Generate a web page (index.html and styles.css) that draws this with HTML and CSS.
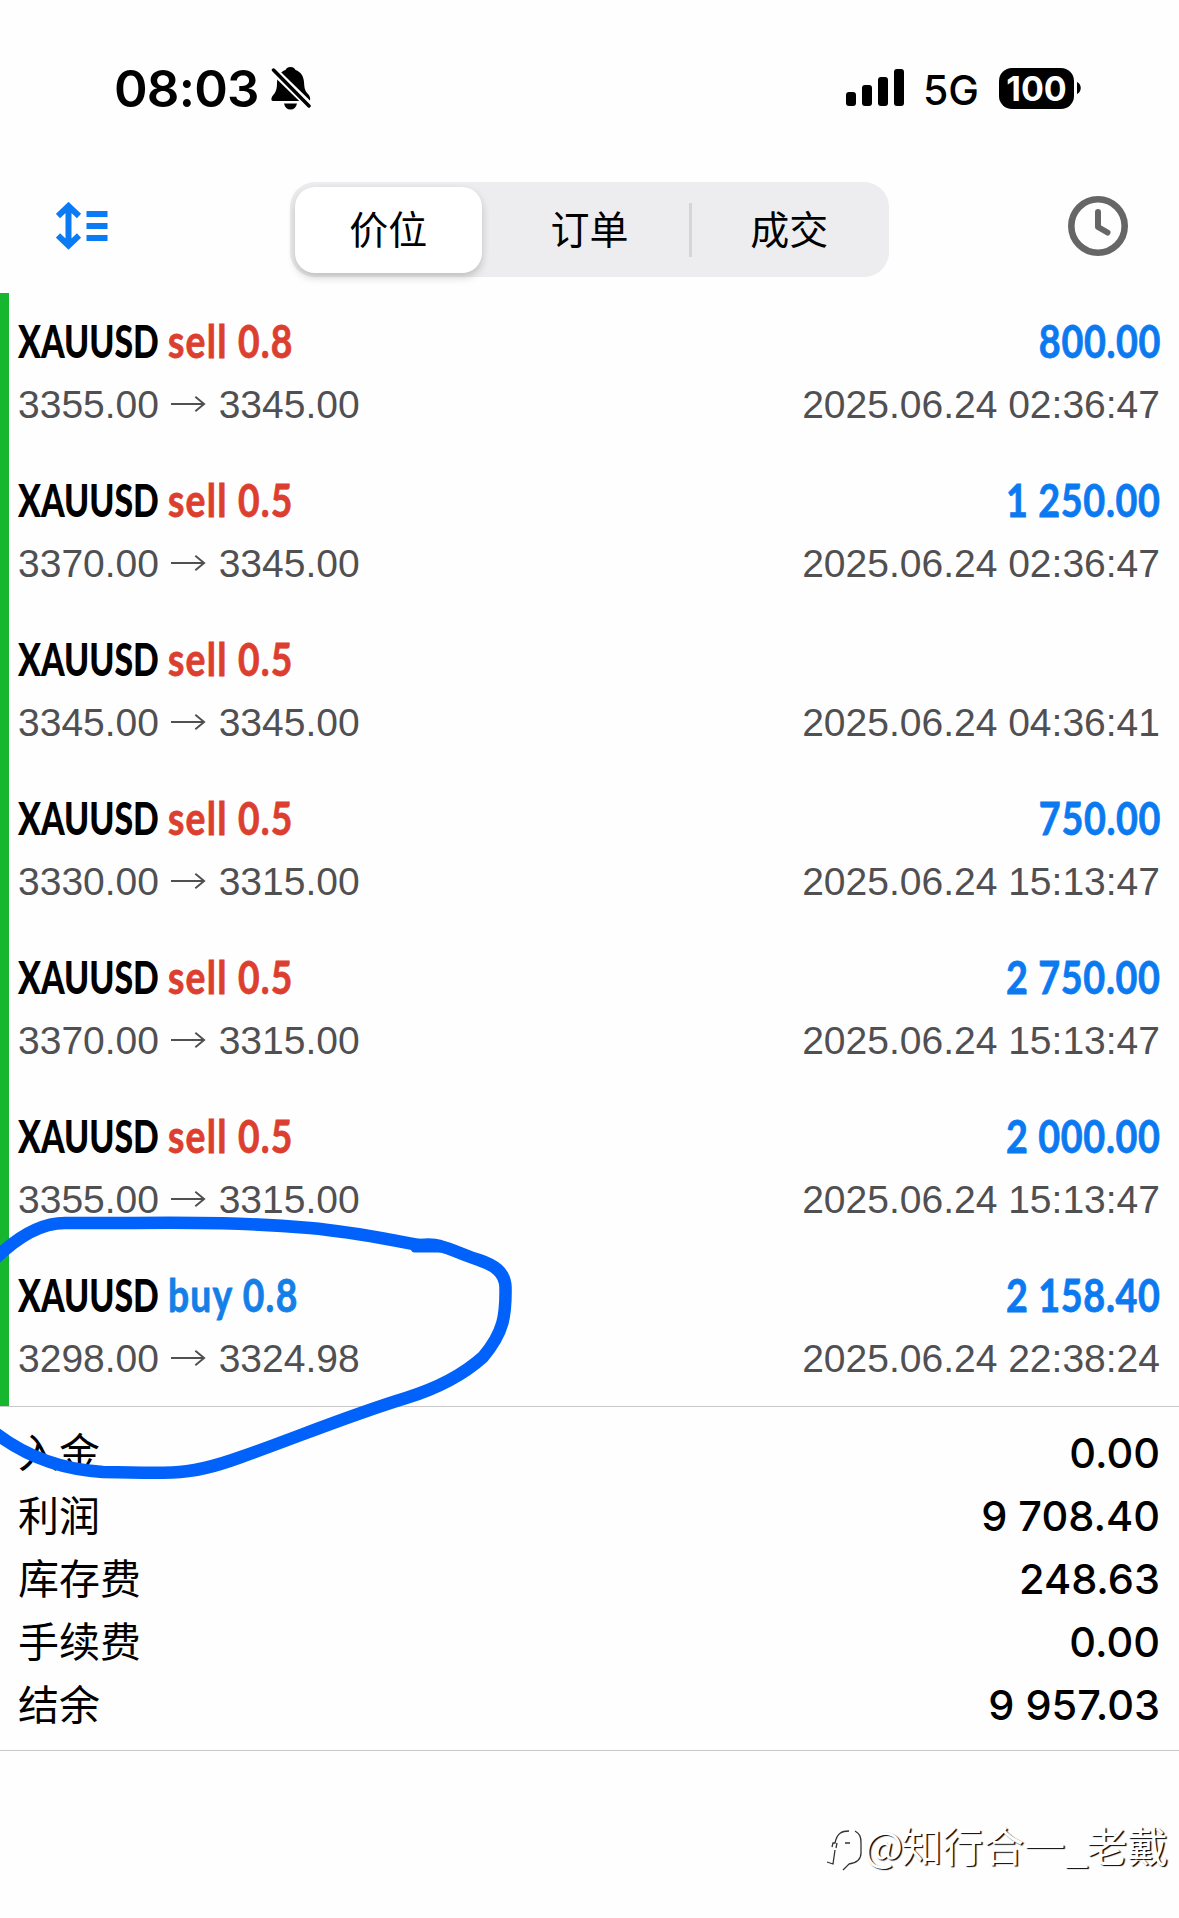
FILE: index.html
```
<!DOCTYPE html>
<html lang="zh-CN">
<head>
    <meta charset="UTF-8">
    <meta name="viewport" content="width=device-width, initial-scale=1.0">
    <title>历史</title>
    <link rel="stylesheet" href="styles.css">
</head>
<body>
<svg class="defs" width="0" height="0">
    <symbol id="arrow" viewBox="0 0 39 28">
        <path d="M1 14H35M26 6.5L35 14L26 21.5" fill="none" stroke="#505052" stroke-width="2"/>
    </symbol>
</svg>
<header class="status">
    <div class="status-left">
        <span class="time">08:03</span>
        <svg width="40" height="43" viewBox="0 0 40 43">
            <path d="M19.500 0C22.500 0 24 1.500 24.500 3C30 5 32.500 9 33 15C33.300 21 34 24 37 27C39 29 39.500 31 39 34H2C0 34 0 31 1.500 29C5 25 6 22 6 16C6.300 9 9 5 14.500 3C15 1.500 16.500 0 19.500 0Z"/>
            <path d="M13 36.500H26C25 40.500 23 42.500 19.500 42.500S14 40.500 13 36.500Z"/>
            <path d="M0 1L40 40" stroke="#fff" stroke-width="8"/>
            <path d="M2.500 3L38 39" stroke="#000" stroke-width="3.500" stroke-linecap="round"/>
        </svg>
    </div>
    <div class="status-right">
        <svg width="58" height="38" viewBox="0 0 58 38">
            <rect x="0" y="23" width="10" height="14" rx="3"/>
            <rect x="16" y="16" width="10" height="21" rx="3"/>
            <rect x="32" y="8" width="10" height="29" rx="3"/>
            <rect x="48" y="0" width="10" height="37" rx="3"/>
        </svg>
        <span class="network">5G</span>
        <span class="battery">100</span>
        <svg class="nub" width="4" height="12" viewBox="0 0 4 12"><path d="M0 0C5 2 5 10 0 12Z"/></svg>
    </div>
</header>
<nav class="nav">
    <svg width="52" height="48" viewBox="0 0 52 48">
        <path d="M12.500 5V43M2 14L12.500 4L23 14M2 33.500L12.500 43.500L23 33.500" fill="none" stroke="#0b7af5" stroke-width="6"/>
        <path d="M30.500 12H51.500M30.500 24H51.500M30.500 36H51.500" stroke="#0b7af5" stroke-width="6"/>
    </svg>
    <div class="tabs">
        <span class="tab active">价位</span>
        <span class="tab">订单</span>
        <span class="tab divided">成交</span>
    </div>
    <svg width="60" height="60" viewBox="0 0 60 60">
        <circle cx="30" cy="30" r="26.700" fill="none" stroke="#666" stroke-width="6.600"/>
        <path d="M30 16V31L39.500 36.500" fill="none" stroke="#666" stroke-width="6" stroke-linecap="round" stroke-linejoin="round"/>
    </svg>
</nav>
<main class="deals">
    <div class="deal">
        <div class="title"><b class="symbol">XAUUSD</b><b class="side sell">sell 0.8</b><b class="profit">800.00</b></div>
        <div class="detail"><span>3355.00 <svg class="to"><use href="#arrow"/></svg> 3345.00</span><span>2025.06.24 02:36:47</span></div>
    </div>
    <div class="deal">
        <div class="title"><b class="symbol">XAUUSD</b><b class="side sell">sell 0.5</b><b class="profit">1 250.00</b></div>
        <div class="detail"><span>3370.00 <svg class="to"><use href="#arrow"/></svg> 3345.00</span><span>2025.06.24 02:36:47</span></div>
    </div>
    <div class="deal">
        <div class="title"><b class="symbol">XAUUSD</b><b class="side sell">sell 0.5</b></div>
        <div class="detail"><span>3345.00 <svg class="to"><use href="#arrow"/></svg> 3345.00</span><span>2025.06.24 04:36:41</span></div>
    </div>
    <div class="deal">
        <div class="title"><b class="symbol">XAUUSD</b><b class="side sell">sell 0.5</b><b class="profit">750.00</b></div>
        <div class="detail"><span>3330.00 <svg class="to"><use href="#arrow"/></svg> 3315.00</span><span>2025.06.24 15:13:47</span></div>
    </div>
    <div class="deal">
        <div class="title"><b class="symbol">XAUUSD</b><b class="side sell">sell 0.5</b><b class="profit">2 750.00</b></div>
        <div class="detail"><span>3370.00 <svg class="to"><use href="#arrow"/></svg> 3315.00</span><span>2025.06.24 15:13:47</span></div>
    </div>
    <div class="deal">
        <div class="title"><b class="symbol">XAUUSD</b><b class="side sell">sell 0.5</b><b class="profit">2 000.00</b></div>
        <div class="detail"><span>3355.00 <svg class="to"><use href="#arrow"/></svg> 3315.00</span><span>2025.06.24 15:13:47</span></div>
    </div>
    <div class="deal">
        <div class="title"><b class="symbol">XAUUSD</b><b class="side buy">buy 0.8</b><b class="profit">2 158.40</b></div>
        <div class="detail"><span>3298.00 <svg class="to"><use href="#arrow"/></svg> 3324.98</span><span>2025.06.24 22:38:24</span></div>
    </div>
</main>
<section class="summary">
    <div class="total"><span>入金</span><span class="num">0.00</span></div>
    <div class="total"><span>利润</span><span class="num">9 708.40</span></div>
    <div class="total"><span>库存费</span><span class="num">248.63</span></div>
    <div class="total"><span>手续费</span><span class="num">0.00</span></div>
    <div class="total"><span>结余</span><span class="num">9 957.03</span></div>
</section>
<footer class="watermark">
    <svg class="avatar" width="40" height="44" viewBox="0 0 40 44">
        <path d="M7 19L8 15H10C12 5 17 3 24 3M12 15L11 20M20 15H25M10 22L8 36L2 34" fill="none" stroke="#333" stroke-width="1.300"/>
        <path d="M30 3C35 6 36 9 36 15V25C36 32 31 35 24 36L18 42" fill="none" stroke="#333" stroke-width="1.300"/>
    </svg>
    <span><span class="at">@</span>知行合一<span class="at">_</span>老戴</span>
</footer>
<!-- hand-drawn mark round the last deal -->
<svg class="mark" width="530" height="280" viewBox="0 1210 530 280">
    <path d="M-6 1260C18 1236 42 1223 65 1223H120C200 1222 250 1223 310 1228C355 1232 390 1240 420 1245C428 1244 434 1244 440 1246C452 1249 466 1256 479 1260C494 1265 505 1272 505.500 1287C506 1315 504 1332 483 1357C463 1375 435 1389 406 1398C350 1415 295 1438 241 1457C216 1466 195 1472 172 1472.500C148 1473 125 1472.500 103 1472C68 1470 30 1460 -6 1432" fill="none" stroke="#0062fb" stroke-width="12.500"/>
    <path d="M415 1248L440 1248" stroke="#0062fb" stroke-width="9" stroke-linecap="round"/>
</svg>
</body>
</html>
```
FILE: styles.css
```
* {
    box-sizing: border-box;
}

body {
    position: relative;
    margin: 0;
    height: 1918px;
    overflow: hidden;
    background-color: #fefefe;
    color: #000;
    font-family: Inter, 'Noto Sans CJK SC', sans-serif;
}

.defs {
    position: absolute;
}

.status {
    display: flex;
    justify-content: space-between;
    align-items: center;
    height: 176px;
    padding: 0 98px 0 114px;
}

.status-left, .status-right {
    display: flex;
    align-items: center;
}

.status-left {
    gap: 12px;
}

.time {
    font-size: 51px;
    font-weight: 600;
    letter-spacing: -.8px;
    width: 145px;
    white-space: nowrap;
}

.network {
    font-size: 41px;
    font-weight: 500;
    width: 56px;
    margin: 3px 20px 0 19px;
}

.battery {
    width: 75px;
    height: 41px;
    border-radius: 13px;
    background-color: #000;
    color: #fff;
    font-size: 34px;
    font-weight: 700;
    line-height: 42px;
    text-align: center;
}

.nub {
    margin-left: 3px;
}

.nav {
    display: flex;
    justify-content: space-between;
    align-items: center;
    height: 117px;
    padding: 0 51px 17px 56px;
}

.tabs {
    display: grid;
    grid-template-columns: repeat(3, 1fr);
    width: 599px;
    height: 95px;
    margin: 7px -3px 0 0;
    padding: 5px 0;
    border-radius: 25px;
    background-color: #ededef;
    font-size: 39px;
    line-height: 86px;
    text-align: center;
}

.tab.active {
    margin: 0 8px 0 5px;
    border-radius: 20px;
    background-color: #fff;
    box-shadow: 0 4px 9px rgba(0, 0, 0, .2);
}

.tab.divided {
    background: linear-gradient(#d5d5d8, #d5d5d8) 0 50% / 3px 54px no-repeat;
}

.deals {
    border-left: 9px solid #17b62f;
}

.deal {
    height: 159px;
    padding: 20px 19px 0 9px;
}

.title {
    display: grid;
    grid-template-columns: 150px 400px 1fr;
    height: 59px;
    font-family: Lato, sans-serif;
    font-size: 46px;
    line-height: 56px;
    white-space: nowrap;
}

/* condensed look */
.symbol, .side {
    justify-self: start;
    font-weight: 900;
    transform: scaleX(.735);
    transform-origin: left;
}

.side {
    font-weight: 700;
    letter-spacing: 1.500px;
    -webkit-text-stroke: .8px;
    transform: scaleX(.81);
}

.profit {
    justify-self: end;
    color: #0b7af0;
    margin-right: -1px;
    letter-spacing: .8px;
    -webkit-text-stroke: .8px;
    transform: scaleX(.82);
    transform-origin: right;
}

.sell {
    color: #dc3f2f;
}

.buy {
    color: #157fe8;
}

.detail {
    display: flex;
    justify-content: space-between;
    color: #505052;
    font-family: 'Liberation Sans', sans-serif;
    font-size: 39px;
    line-height: 66px;
    white-space: nowrap;
}

.to {
    width: 38px;
    height: 28px;
}

.summary {
    height: 345px;
    padding: 14px 19px 0 18px;
    border-top: 1px solid #c8c8c8;
    border-bottom: 1px solid #c8c8c8;
}

.total {
    display: flex;
    justify-content: space-between;
    height: 63px;
    font-size: 41px;
    line-height: 64px;
}

.num {
    font-size: 41.500px;
    font-weight: 500;
}

.watermark {
    display: flex;
    justify-content: flex-end;
    align-items: center;
    gap: 1px;
    height: 60px;
    margin-top: 63px;
    padding-right: 11px;
    color: #fff;
    font-family: 'Noto Sans CJK SC', sans-serif;
    font-size: 41px;
    line-height: 60px;
    text-shadow: 1.500px 1px 1px #000;
}

.avatar {
    margin: 12px -2px 0 0;
}

.at {
    letter-spacing: -2px;
}

.mark {
    position: absolute;
    left: 0;
    top: 1210px;
}
```
